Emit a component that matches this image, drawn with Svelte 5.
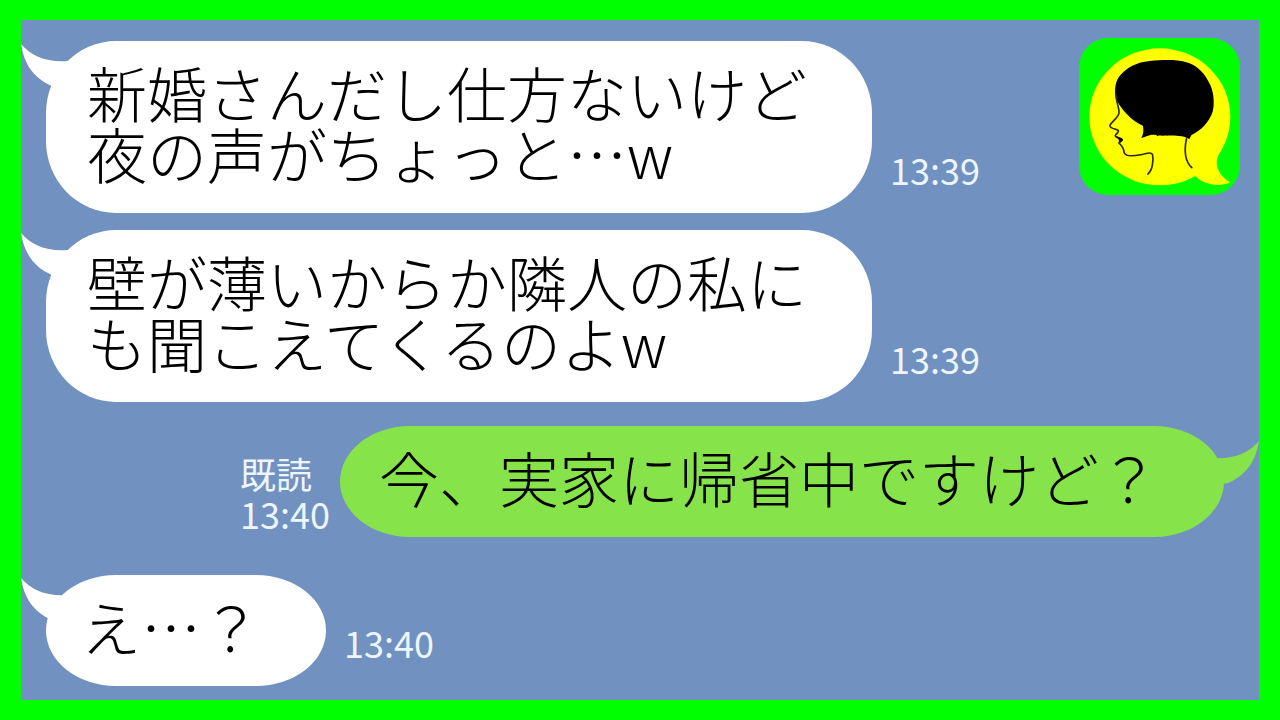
<script>
  const messages = [
    { id: 1, own: false, text: ['新婚さんだし仕方ないけど', '夜の声がちょっと…w'], time: '13:39' },
    { id: 2, own: false, text: ['壁が薄いからか隣人の私に', 'も聞こえてくるのよw'], time: '13:39' },
    { id: 3, own: true, text: ['今、実家に帰省中ですけど？'], time: '13:40', read: true },
    { id: 4, own: false, text: ['え…？'], time: '13:40' }
  ];
</script>

<main class="chat">
  <ol class="messages">
    {#each messages as message (message.id)}
      <li class="message" class:own={message.own} class:single={message.text.length === 1}>
        <div class="bubble">
          <svg class="tail" viewBox="0 0 50 46" aria-hidden="true">
            <path d="M0 1C10 13 27 20 47 18L50 46L31 43C12 35 3 20 0 1Z" />
          </svg>
          <p>
            {#each message.text as line}
              <span class="line">{line}</span>
            {/each}
          </p>
        </div>
        <div class="meta">
          {#if message.read}<span>既読</span>{/if}
          <time>{message.time}</time>
        </div>
      </li>
    {/each}
  </ol>

  <svg class="avatar" viewBox="58 53 484 472" aria-hidden="true">
    <rect x="58" y="53" width="484" height="472" rx="88" fill="#00ff00" />
    <ellipse cx="301" cy="290" rx="212" ry="206" fill="#ffff00" />
    <path d="M480 400C464 424 472 464 513 487C475 503 432 493 407 467Z" fill="#ffff00" />
    <path
      d="M168 234C164 202 168 180 184 163C204 140 232 126 270 122C312 118 350 117 378 125C412 133 436 158 452 193C462 214 465 240 462 264C457 296 432 323 411 336C400 342 396 344 394 348L390 357L374 350C354 345 332 348 316 346C308 349 302 344 294 348C287 342 282 345 276 344C265 347 256 350 245 354C252 344 253 330 250 317C215 300 187 271 168 234Z"
    />
    <g fill="none" stroke="#2c2900" stroke-width="5" stroke-linecap="round" stroke-linejoin="round">
      <path d="M170 225C169 249 181 263 178 280C173 296 154 306 151 316C149 325 169 326 176 331C179 337 167 343 167 347C168 352 180 353 187 358C188 364 178 366 178 369C190 378 192 385 194 398C199 410 223 408 243 404C258 402 273 393 279 403C283 421 279 450 265 462" />
      <path d="M381 356C374 390 376 423 397 443" />
    </g>
    <path d="M168 347C175 352 189 353 190 359C189 366 181 366 177 364C181 360 174 354 168 347Z" />
  </svg>
</main>

<style>
  :global(body) {
    margin: 0;
  }

  .chat {
    position: relative;
    box-sizing: border-box;
    min-height: 100vh;
    padding: 21px 35px 13px 25px;
    border: 20px solid #00ff00;
    border-width: 20px 21px;
    background: #7191c0;
    font-family: "Noto Sans CJK JP", "Noto Sans", sans-serif;
  }

  .messages {
    display: flex;
    flex-direction: column;
    gap: 17px;
    margin: 0;
    padding: 0;
    list-style: none;
  }

  .message {
    --bubble: #ffffff;
    display: flex;
    align-items: flex-end;
    gap: 18px;
  }

  .message.own {
    --bubble: #86e44a;
    flex-direction: row-reverse;
    gap: 10px;
    margin: 7px 0 21px;
  }

  .bubble {
    position: relative;
    padding: 20px 65px 30px 41px;
    border-radius: 70px / 72px;
    background: var(--bubble);
  }

  .single .bubble {
    padding-left: 35px;
    border-radius: 70px / 50%;
  }

  .own .bubble {
    padding-left: 39px;
  }

  .tail {
    position: absolute;
    top: 2px;
    left: -25px;
    width: 50px;
    height: 46px;
    fill: var(--bubble);
  }

  .own .tail {
    top: 14px;
    right: -35px;
    left: auto;
    transform: scaleX(-1);
  }

  p {
    position: relative;
    margin: 0;
    color: #000;
    font-size: 60px;
    font-weight: 300;
    line-height: 61px;
    white-space: nowrap;
  }

  .line {
    display: block;
  }

  .meta {
    display: flex;
    flex-direction: column;
    padding-bottom: 24px;
    color: #edf5ff;
    font-size: 36px;
    line-height: 40px;
    white-space: nowrap;
  }

  .own .meta {
    padding-bottom: 4px;
  }

  .avatar {
    position: absolute;
    top: 18px;
    right: 19px;
    width: 161px;
    height: 157px;
  }
</style>
